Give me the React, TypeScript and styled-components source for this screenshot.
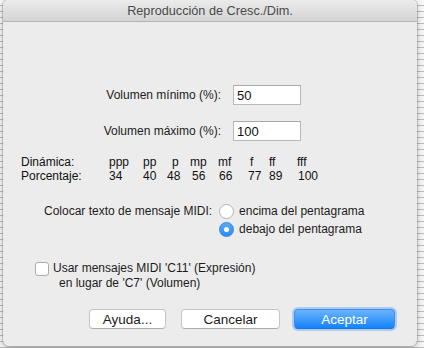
import styled, { createGlobalStyle } from "styled-components";

const GlobalStyle = createGlobalStyle`
  html, body {
    margin: 0;
    padding: 0;
  }
  body {
    width: 424px;
    height: 348px;
    overflow: hidden;
    background: #f6f6f6
      repeating-linear-gradient(to bottom, transparent 0 5px, #bdbdbd 5px 6px);
    font-family: "Liberation Sans", Arial, sans-serif;
    color: #1c1c1c;
  }
`;

const Dialog = styled.div`
  margin-left: 3px;
  width: 414px;
  height: 346px;
  background: #ececec;
  border-radius: 5px 5px 6px 6px;
  box-shadow: 0 0 0 1px rgba(0, 0, 0, 0.14), 0 2px 6px rgba(0, 0, 0, 0.25);
  overflow: hidden;
  display: flex;
  flex-direction: column;
`;

const TitleBar = styled.div`
  height: 21px;
  flex: none;
  border-bottom: 1px solid #b4b4b4;
  background: linear-gradient(#ebebeb, #d4d4d4);
  display: flex;
  align-items: center;
  justify-content: center;
  font-size: 12.7px;
  color: #4a4a4a;
`;

const Body = styled.div`
  flex: 1;
  display: flex;
  flex-direction: column;
  padding: 63px 22px 17px 0;
  font-size: 12px;
`;

const FieldRow = styled.div`
  display: grid;
  grid-template-columns: 218px 68px;
  column-gap: 12px;
  align-items: center;
  height: 20px;
  & + & {
    margin-top: 16px;
  }
`;

const FieldLabel = styled.label`
  text-align: right;
  white-space: nowrap;
`;

const NumberInput = styled.input`
  box-sizing: border-box;
  width: 68px;
  height: 20px;
  margin: 0;
  padding: 1px 3px 0;
  border: 1px solid #b9b9b9;
  border-top-color: #a9a9a9;
  background: #fff;
  font: 13px "Liberation Sans", Arial, sans-serif;
  color: #111;
  outline: none;
`;

const DynTable = styled.div`
  margin-top: 14px;
  padding-left: 18px;
  display: grid;
  grid-template-columns: 88px 34px 24px 23px 28px 30px 21px 28px 30px;
  grid-auto-rows: 14px;
  font-size: 12px;
  line-height: 14px;
  color: #111;
`;

const Cell = styled.span<{ $offset?: number }>`
  padding-left: ${(p) => p.$offset ?? 0}px;
  white-space: nowrap;
`;

const PlacementGroup = styled.div`
  margin-top: 19px;
  padding-left: 41px;
  display: grid;
  grid-template-columns: auto auto;
  justify-content: start;
  column-gap: 7px;
`;

const PlacementLabel = styled.span`
  line-height: 18px;
  white-space: nowrap;
`;

const RadioList = styled.div`
  display: flex;
  flex-direction: column;
`;

const RadioRow = styled.label`
  display: flex;
  align-items: center;
  gap: 5px;
  height: 18px;
  white-space: nowrap;
`;

const RadioDot = styled.span<{ $on?: boolean }>`
  box-sizing: border-box;
  width: 15px;
  height: 15px;
  border-radius: 50%;
  display: flex;
  align-items: center;
  justify-content: center;
  border: 1px solid ${(p) => (p.$on ? "#2f86ec" : "#b3b3b3")};
  background: ${(p) =>
    p.$on ? "linear-gradient(#5aaaf9, #2d8af3)" : "#fff"};
  &::after {
    content: "";
    display: ${(p) => (p.$on ? "block" : "none")};
    width: 5px;
    height: 5px;
    border-radius: 50%;
    background: #fff;
  }
`;

const CheckRow = styled.label`
  margin-top: 23px;
  padding-left: 32px;
  display: flex;
  align-items: flex-start;
  gap: 4px;
`;

const CheckBox = styled.span`
  box-sizing: border-box;
  flex: none;
  width: 14px;
  height: 14px;
  margin-top: 1px;
  border: 1px solid #ababab;
  border-radius: 3px;
  background: #fff;
`;

const CheckText = styled.span`
  display: flex;
  flex-direction: column;
  line-height: 15px;
`;

const Line = styled.span<{ $indent?: number }>`
  padding-left: ${(p) => p.$indent ?? 0}px;
  white-space: nowrap;
`;

const ButtonBar = styled.div`
  margin-top: auto;
  display: flex;
  justify-content: flex-end;
  gap: 14px;
  & > :first-child {
    margin-right: 1px;
  }
`;

const Button = styled.button<{ $w: number; $primary?: boolean }>`
  box-sizing: border-box;
  width: ${(p) => p.$w}px;
  height: 20px;
  margin: 0;
  padding: 0;
  border-radius: 4px;
  font: 13.5px "Liberation Sans", Arial, sans-serif;
  border: 1px solid ${(p) => (p.$primary ? "#3b8ff3" : "#c6c6c6")};
  border-bottom-color: ${(p) => (p.$primary ? "#1f73e4" : "#adadad")};
  background: ${(p) =>
    p.$primary ? "linear-gradient(#6db4fb, #1483fd)" : "#fff"};
  color: ${(p) => (p.$primary ? "#fff" : "#1c1c1c")};
  box-shadow: ${(p) =>
    p.$primary ? "0 0 0 2px rgba(120, 178, 246, 0.55)" : "none"};
`;

const dynamics = [
  { mark: "ppp", pct: "34", mo: 0, po: 0 },
  { mark: "pp", pct: "40", mo: 0, po: 0 },
  { mark: "p", pct: "48", mo: 5, po: 0 },
  { mark: "mp", pct: "56", mo: 0, po: 2 },
  { mark: "mf", pct: "66", mo: 0, po: 1 },
  { mark: "f", pct: "77", mo: 2, po: 0 },
  { mark: "ff", pct: "89", mo: 0, po: 0 },
  { mark: "fff", pct: "100", mo: 0, po: 1 },
];

const App = () => {
  return (
    <>
      <GlobalStyle />
      <Dialog>
        <TitleBar>Reproducción de Cresc./Dim.</TitleBar>
        <Body>
          <FieldRow>
            <FieldLabel>Volumen mínimo (%):</FieldLabel>
            <NumberInput defaultValue="50" />
          </FieldRow>
          <FieldRow>
            <FieldLabel>Volumen máximo (%):</FieldLabel>
            <NumberInput defaultValue="100" />
          </FieldRow>

          <DynTable>
            <Cell>Dinámica:</Cell>
            {dynamics.map((d) => (
              <Cell key={d.mark} $offset={d.mo}>
                {d.mark}
              </Cell>
            ))}
            <Cell>Porcentaje:</Cell>
            {dynamics.map((d) => (
              <Cell key={d.pct} $offset={d.po}>
                {d.pct}
              </Cell>
            ))}
          </DynTable>

          <PlacementGroup>
            <PlacementLabel>Colocar texto de mensaje MIDI:</PlacementLabel>
            <RadioList>
              <RadioRow>
                <RadioDot />
                encima del pentagrama
              </RadioRow>
              <RadioRow>
                <RadioDot $on />
                debajo del pentagrama
              </RadioRow>
            </RadioList>
          </PlacementGroup>

          <CheckRow>
            <CheckBox />
            <CheckText>
              <Line>Usar mensajes MIDI 'C11' (Expresión)</Line>
              <Line $indent={6}>en lugar de 'C7' (Volumen)</Line>
            </CheckText>
          </CheckRow>

          <ButtonBar>
            <Button $w={77}>Ayuda...</Button>
            <Button $w={99}>Cancelar</Button>
            <Button $w={101} $primary>
              Aceptar
            </Button>
          </ButtonBar>
        </Body>
      </Dialog>
    </>
  );
};

export default App;
